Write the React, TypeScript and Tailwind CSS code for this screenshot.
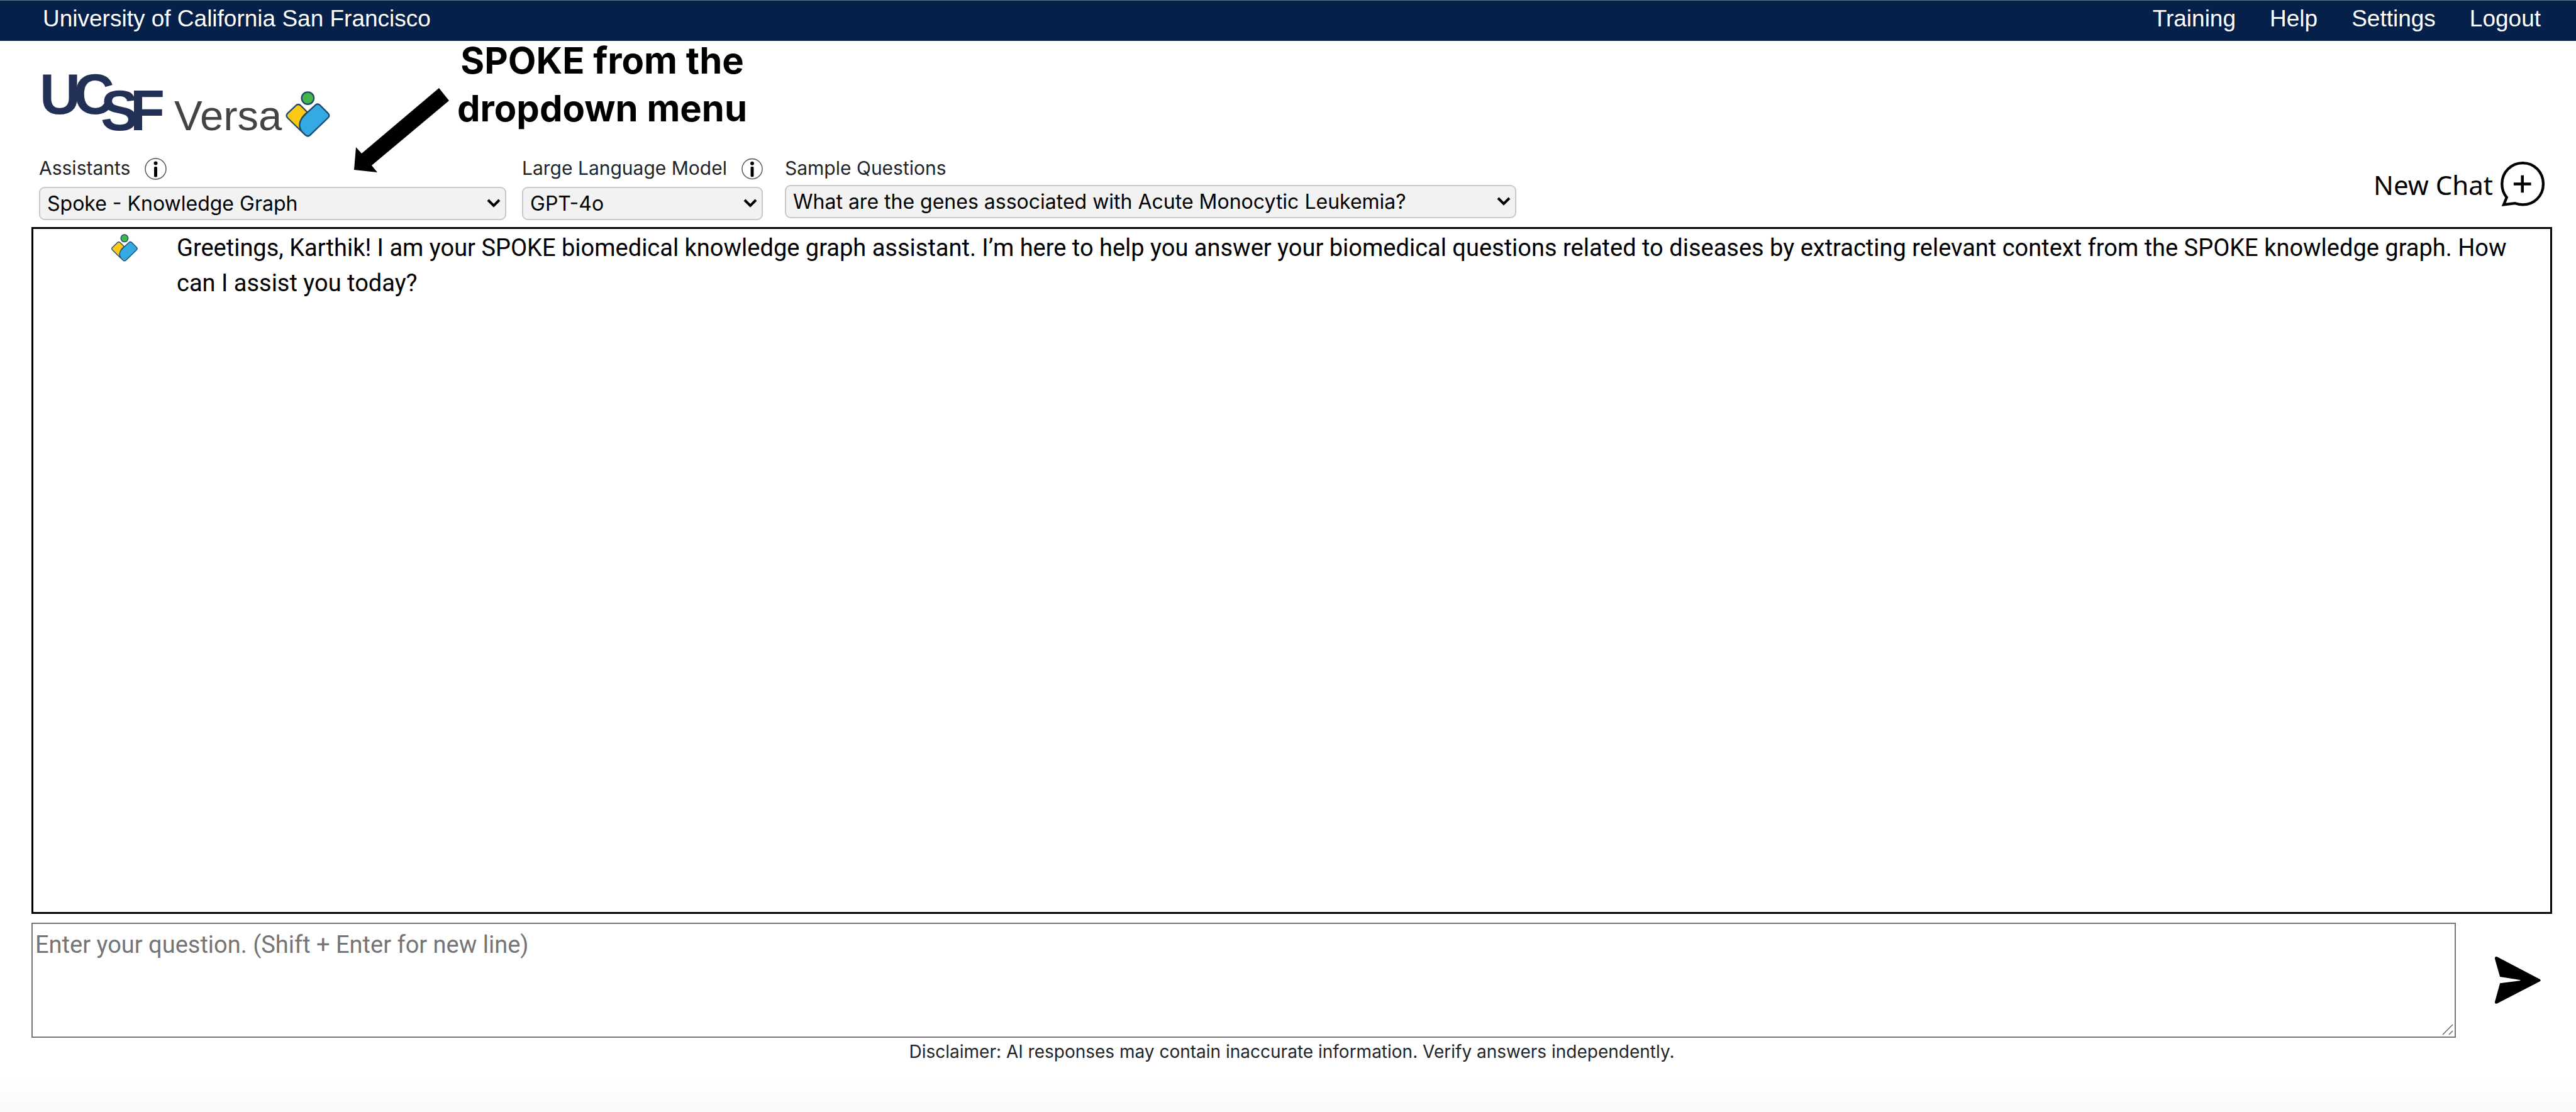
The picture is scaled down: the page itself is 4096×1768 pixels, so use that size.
import type { ReactNode } from "react";

const navLinks = ["Training", "Help", "Settings", "Logout"];

function MarkShapes() {
  return (
    <g stroke="#1b4a6e" strokeWidth="9" strokeLinejoin="round">
      <path
        fill="#fcc917"
        d="M62 90 Q78 74 94 90 L134 130 Q108 152 98 172 Q82 200 94 246 L12 166 Q-2 151 12 137 Z"
      />
      <path
        fill="#35a9e1"
        d="M182 88 Q198 72 214 88 L262 136 Q277 151 262 166 L152 272 Q137 286 122 272 L102 253 Q72 214 98 172 Q106 158 134 132 Z"
      />
      <circle cx="137" cy="43" r="38" fill="#43b549" />
    </g>
  );
}

function Logo() {
  return (
    <svg
      viewBox="-10 -20 480 130"
      className="h-[130px] w-[480px]"
      role="img"
      aria-label="UCSF Versa"
      fontFamily="'Liberation Sans', Arial, sans-serif"
    >
      <g fontSize="90" fontWeight="700" fill="#223056">
        <text x="-5" y="64">U</text>
        <text x="49" y="64">C</text>
        <text x="92" y="90">S</text>
        <text x="139" y="90">F</text>
      </g>
      <text x="209" y="90" fontSize="67" fill="#444444">Versa</text>
      <svg x="386" y="28" width="71" height="73" viewBox="0 0 275 285">
        <MarkShapes />
      </svg>
    </svg>
  );
}

function InfoButton({ label }: { label: string }) {
  return (
    <button type="button" aria-label={label} className="size-[35px]">
      <svg viewBox="0 0 35 35" className="size-full">
        <circle cx="17.5" cy="17.5" r="16.5" fill="none" stroke="#555" strokeWidth="1.5" />
        <circle cx="17.5" cy="8.5" r="3" />
        <rect x="15" y="14" width="5" height="16.5" rx="1.5" />
      </svg>
    </button>
  );
}

function Picker({
  id,
  label,
  value,
  width,
  children,
}: {
  id: string;
  label: string;
  value: string;
  width: string;
  children?: ReactNode;
}) {
  return (
    <div className={`flex flex-col gap-[11px] ${width}`}>
      <div className="flex items-start gap-[23px]">
        <label htmlFor={id} className="text-[30px] leading-8 whitespace-nowrap text-[#212529]">
          {label}
        </label>
        {children}
      </div>
      <div className="relative">
        <select
          id={id}
          className="block h-[53px] w-full appearance-none rounded-[9px] border-2 border-[#c8c8c8] bg-[#f2f2f2] pr-12 pl-[11px] text-[32px] text-black"
        >
          <option>{value}</option>
        </select>
        <svg
          viewBox="0 0 22 14"
          className="pointer-events-none absolute top-[19px] right-[9px] h-[14px] w-[22px]"
          fill="none"
          stroke="black"
          strokeWidth="4"
        >
          <path d="M2 2 L11 11 L20 2" />
        </svg>
      </div>
    </div>
  );
}

export default function App() {
  return (
    <div className="relative flex min-h-screen flex-col bg-white font-['Inter',sans-serif] text-black">
      <header className="flex h-[65px] items-center justify-between border-t border-[#5f7390] bg-[#052049] pr-[56px] pb-[7px] pl-[68px] font-['Liberation_Sans',Arial,sans-serif] text-[37px] text-white">
        <a href="#home">University of California San Francisco</a>
        <nav className="flex gap-[54px]">
          {navLinks.map((link) => (
            <a key={link} href={`#${link.toLowerCase()}`}>
              {link}
            </a>
          ))}
        </nav>
      </header>

      <div className="pt-[32px] pl-[58px]">
        <Logo />
      </div>

      <div className="flex items-start pt-[24px] pr-[49px] pb-[11px] pl-[62px]">
        <Picker id="assistant" label="Assistants" value="Spoke - Knowledge Graph" width="w-[743px] mr-[25px]">
          <InfoButton label="About assistants" />
        </Picker>
        <Picker id="model" label="Large Language Model" value="GPT-4o" width="w-[383px] mr-[35px]">
          <InfoButton label="About models" />
        </Picker>
        <Picker
          id="sample"
          label="Sample Questions"
          value="What are the genes associated with Acute Monocytic Leukemia?"
          width="w-[1163px]"
        />
        <button
          type="button"
          className="mt-[3px] ml-auto flex items-center gap-[11px] font-['Noto_Sans',sans-serif] text-[42px] leading-[72px] whitespace-nowrap"
        >
          <span className="pt-1">New Chat</span>
          <svg viewBox="0 0 284 290" className="h-[73px] w-[72px]" fill="none" stroke="black">
            <path
              strokeWidth="17"
              strokeLinejoin="miter"
              d="M42 230 C22 206 12 178 12 145 C12 71 70 12 143 12 C216 12 273 71 273 145 C273 219 216 276 143 276 C126 276 110 272 95 267 L23 276 L42 230 Z"
            />
            <path strokeWidth="18" d="M86 145 H196 M141 90 V200" />
          </svg>
        </button>
      </div>

      <main className="mr-[38px] ml-[50px] flex flex-1 flex-col">
        <section className="flex-1 border-3 border-black pt-[2px] pr-[50px] pl-[124px]">
          <div className="flex items-start gap-[62px]">
            <svg viewBox="0 0 275 285" className="mt-[5px] h-[46px] w-[42px] shrink-0" aria-hidden="true">
              <MarkShapes />
            </svg>
            <p className="font-['Roboto',sans-serif] text-[38px] leading-[56px]">
              Greetings, Karthik! I am your SPOKE biomedical knowledge graph assistant. I’m here to help you answer
              your biomedical questions related to diseases by extracting relevant context from the SPOKE knowledge
              graph. How can I assist you today?
            </p>
          </div>
        </section>

        <form className="mt-[14px] flex items-center">
          <div className="relative flex-1">
            <textarea
              aria-label="Your question"
              placeholder="Enter your question. (Shift + Enter for new line)"
              className="block h-[183px] w-full resize-none border-2 border-[#767676] px-[4px] pt-[10px] font-['Roboto',sans-serif] text-[38px] leading-[46px] placeholder:text-[#757575]"
            />
            <svg
              viewBox="0 0 18 18"
              className="pointer-events-none absolute right-[4px] bottom-[4px] size-[18px]"
              stroke="#666"
              strokeWidth="1.5"
              aria-hidden="true"
            >
              <path d="M1 17 L17 1 M11 17 L17 11" />
            </svg>
          </div>
          <button type="button" aria-label="Send" className="mr-[18px] ml-[62px] h-[75px] w-[73px]">
            <svg viewBox="0 0 287 295" className="size-full">
              <path d="M12 0 L282 142 Q290 148 282 154 L12 294 Q-2 296 0 282 L32 166 L156 150 Q162 148 156 146 L32 126 L0 14 Q-2 -2 12 0 Z" />
            </svg>
          </button>
        </form>
        <p className="pt-[2px] text-center text-[28px] leading-[40px] text-[#212529]">
          Disclaimer: AI responses may contain inaccurate information. Verify answers independently.
        </p>
      </main>
      <footer className="mt-[24px] h-[52px] bg-linear-to-b from-white to-[#f9f9f9]" />

      <p className="absolute top-[58px] left-[727px] text-center text-[58px] leading-[76px] font-bold whitespace-nowrap">
        SPOKE from the
        <br />
        dropdown menu
      </p>
      <svg viewBox="0 0 151 134" className="absolute top-[140px] left-[563px] h-[134px] w-[151px]" aria-hidden="true">
        <path d="M135 0 L151 20 L28 123 L37 134 L0 130 L3 94 L12 104 Z" />
      </svg>
    </div>
  );
}
